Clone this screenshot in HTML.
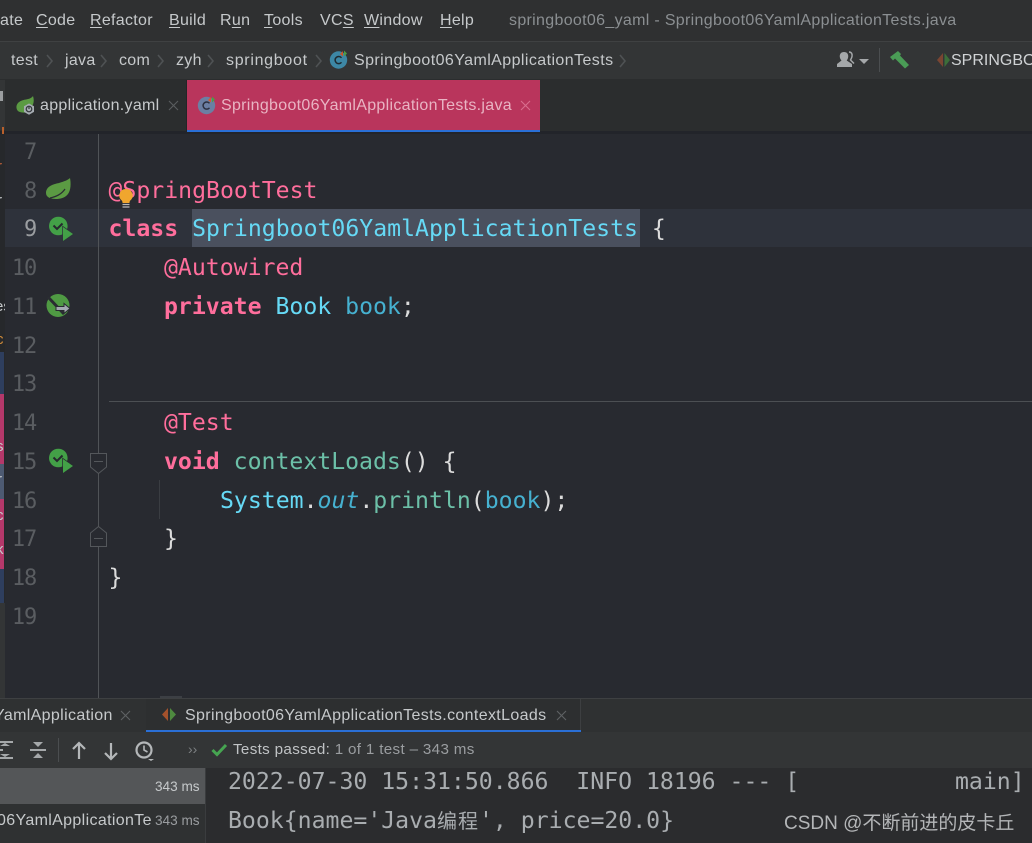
<!DOCTYPE html>
<html><head><meta charset="utf-8">
<style>
html,body{margin:0;padding:0;background:#282a30}
#r{position:relative;width:1032px;height:843px;overflow:hidden;background:#282a30;font-family:"Liberation Sans","Noto Sans CJK SC",sans-serif}
.b{position:absolute}
.t{position:absolute;white-space:pre;line-height:20px}
.m{color:#c6c9cb;font-size:16px;letter-spacing:.3px}
.m u{text-decoration-thickness:1px;text-underline-offset:2px}
.c{position:absolute;left:0;white-space:pre;font-family:"DejaVu Sans Mono","Noto Sans CJK SC",monospace;font-size:23.15px;line-height:39px;height:39px}
.n{position:absolute;width:36px;text-align:right;left:0;font-family:"DejaVu Sans Mono",monospace;font-size:22px;letter-spacing:-1.2px;line-height:39px;color:#5a5d61}
.p{color:#ff6e9c}.k{color:#ff6e9c;font-weight:bold}.y{color:#66d9f5}.f{color:#6cc0a8}.w{color:#dcdcdc}
.v{color:#46b1d0}
svg{position:absolute;overflow:visible}
.o{position:absolute;white-space:pre;font-family:"DejaVu Sans Mono","Noto Sans CJK SC",monospace;font-size:23.15px;line-height:39px;color:#a9adb0}
.e{position:absolute;left:0;font-size:15px;line-height:16px;color:#c6c9cb}
</style></head><body><div id="r">
<!-- bars -->
<div class="b" style="left:0;top:0;width:1032px;height:41px;background:#2f3031"></div>
<div class="b" style="left:0;top:41px;width:1032px;height:1px;background:#3f4142"></div>
<div class="b" style="left:0;top:42px;width:1032px;height:37px;background:#333536"></div>
<div class="b" style="left:0;top:79px;width:1032px;height:52px;background:#2b2d2e"></div>
<div class="b" style="left:0;top:131px;width:1032px;height:3px;background:#22242a"></div>
<div class="b" style="left:0;top:80px;width:5px;height:50px;background:#333536"></div>
<div class="b" style="left:0;top:91px;width:3px;height:10px;background:#9b9ea0"></div>
<div class="b" style="left:2px;top:127px;width:2px;height:7px;background:#b8602c"></div>
<!-- menu -->
<span class="t m" style="left:0;top:11px">ate</span>
<span class="t m" style="left:36px;top:11px"><u>C</u>ode</span>
<span class="t m" style="left:90px;top:11px"><u>R</u>efactor</span>
<span class="t m" style="left:169px;top:11px"><u>B</u>uild</span>
<span class="t m" style="left:220px;top:11px">R<u>u</u>n</span>
<span class="t m" style="left:264px;top:11px"><u>T</u>ools</span>
<span class="t m" style="left:320px;top:11px">VC<u>S</u></span>
<span class="t m" style="left:364px;top:11px"><u>W</u>indow</span>
<span class="t m" style="left:440px;top:11px"><u>H</u>elp</span>
<span class="t" style="left:509px;top:11px;font-size:16px;letter-spacing:.32px;color:#8b8f92">springboot06_yaml - Springboot06YamlApplicationTests.java</span>
<!-- breadcrumbs -->
<span class="t m" style="left:11px;top:51px">test</span>
<span class="t m" style="left:65px;top:51px">java</span>
<span class="t m" style="left:119px;top:51px">com</span>
<span class="t m" style="left:176px;top:51px">zyh</span>
<span class="t m" style="left:226px;top:51px;letter-spacing:.7px">springboot</span>
<span class="t m" style="left:354px;top:51px;letter-spacing:.42px">Springboot06YamlApplicationTests</span>
<svg width="1032" height="80" style="left:0;top:0" fill="none" stroke="#4f5254" stroke-width="1.6">
<path d="M47 55l5 6-5 6M101 55l5 6-5 6M158 55l5 6-5 6M208 55l5 6-5 6M316 55l5 6-5 6M620 55l5 6-5 6"/>
</svg>
<svg width="20" height="20" style="left:329px;top:50px"><circle cx="9.5" cy="10" r="8.7" fill="#3d87a5"/><path d="M12.5 7.8a3.6 3.6 0 1 0 0 4.5" stroke="#1f2a30" stroke-width="1.5" fill="none"/><path d="M14 1l-3 3 3 2.500z" fill="#c9552a"/><path d="M15 .5l3 3-3 3z" fill="#4d9c45"/></svg>
<!-- right toolbar -->
<svg width="40" height="24" style="left:837px;top:52px"><path d="M7 0c3 0 4.500 2 4.200 5-.2 1.500-.8 2.500-1.500 3.500l5.300 3.500V15H0v-3l4.500-3.500C3.700 7.500 3 6.500 2.800 5 2.500 2 4 0 7 0z" fill="#a5a8aa"/><path d="M12 0c2.500 0 3.500 2 3 4.500-.3 1.500-1 2.500-1.500 3.500l3.500 3.500" stroke="#a5a8aa" stroke-width="1.500" fill="none"/><path d="M22 7h10l-5 5z" fill="#a5a8aa"/></svg>
<div class="b" style="left:879px;top:48px;width:1px;height:24px;background:#4b4e50"></div>
<svg width="24" height="24" style="left:890px;top:51px"><path d="M0 6L8 0l3 3-1 1.500 9 9.500-4 3.500-10-10-2 2z" fill="#4a9c56"/></svg>
<svg width="14" height="16" style="left:937px;top:53px"><path d="M6 0v14L0 7z" fill="#7a4532"/><path d="M7.500 0v14L13 7z" fill="#3c6e3a"/></svg>
<span class="t" style="left:951px;top:51px;font-size:16px;color:#d0d3d5">SPRINGBOOT06</span>
<!-- tabs -->
<div class="b" style="left:187px;top:80px;width:353px;height:50px;background:#b9355c"></div>
<div class="b" style="left:186px;top:130px;width:354px;height:2px;background:#2a6fd6"></div>
<div class="b" style="left:186px;top:80px;width:1px;height:52px;background:#232527"></div>
<svg width="26" height="26" style="left:15px;top:95px"><path d="M1.500 13C1 7 7 5 11 4.500c3-.5 5.500-1.500 7-3.500 1 3 1 6 0 8.500l-6 8C6 18 2 17 1.500 13z" fill="#5b9a43"/><path d="M14 8.500l5 2.800v5.600l-5 2.800-5-2.800v-5.600z" fill="#a7adb3"/><circle cx="14" cy="14" r="2.800" fill="none" stroke="#33363a" stroke-width="1.200"/><path d="M14 11.500v2.500" stroke="#33363a" stroke-width="1.200"/></svg>
<span class="t" style="left:40px;top:96px;font-size:16px;letter-spacing:.3px;color:#c6c9cb">application.yaml</span>
<svg width="12" height="12" style="left:168px;top:100px"><path d="M1 1l9 9M10 1l-9 9" stroke="#5a5d5f" stroke-width="1.100"/></svg>
<svg width="20" height="20" style="left:197px;top:95px"><circle cx="9.500" cy="10.500" r="8.700" fill="#6b7fa3"/><path d="M12.500 8.300a3.600 3.600 0 1 0 0 4.500" stroke="#2c3040" stroke-width="1.500" fill="none"/><path d="M14 2l-3 3 3 2.500z" fill="#d85a2a"/><path d="M15 1.500l3 3-3 3z" fill="#4d9c45"/></svg>
<span class="t" style="left:221px;top:96px;font-size:16px;letter-spacing:.3px;color:#e9b4c3">Springboot06YamlApplicationTests.java</span>
<svg width="12" height="12" style="left:520px;top:100px"><path d="M1 1l9 9M10 1l-9 9" stroke="#d96e8e" stroke-width="1.100"/></svg>
<!-- left strip -->
<div class="b" style="left:0;top:134px;width:5px;height:218px;background:#26282b"></div>
<div class="b" style="left:0;top:603px;width:5px;height:95px;background:#333536"></div>
<div class="b" style="left:0;top:352px;width:5px;height:251px;background:#26282b"></div>
<div class="b" style="left:0;top:352px;width:4px;height:42px;background:#2e3e5e"></div>
<div class="b" style="left:0;top:394px;width:4px;height:70px;background:#b4386a"></div>
<div class="b" style="left:0;top:464px;width:4px;height:35px;background:#4d5a72"></div>
<div class="b" style="left:0;top:499px;width:4px;height:70px;background:#b4386a"></div>
<div class="b" style="left:0;top:569px;width:4px;height:34px;background:#2e3e5e"></div>
<div class="b" style="left:0;top:134px;width:5px;height:470px;overflow:hidden">
<span class="e" style="top:25px;left:-3px;color:#c0603a">r</span>
<span class="e" style="top:59px;left:-3px">r</span>
<span class="e" style="top:165px;left:-5px">es</span>
<span class="e" style="top:198px;left:-4px;color:#d08a3a">c</span>
<span class="e" style="top:305px;left:-4px">s</span>
<span class="e" style="top:338px;left:-3px">r</span>
<span class="e" style="top:374px;left:-4px">c</span>
<span class="e" style="top:408px;left:-4px">k</span>
</div>
<!-- current line -->
<div class="b" style="left:5px;top:209px;width:1027px;height:38px;background:#2e323b"></div>
<div class="b" style="left:192px;top:209px;width:448px;height:38px;background:#4a505e"></div>
<!-- gutter -->
<div class="b" style="left:98px;top:134px;width:1px;height:564px;background:#505357"></div>
<div class="b" style="left:109px;top:401px;width:923px;height:1px;background:#4c4f53"></div>
<div class="b" style="left:159px;top:480px;width:1px;height:39px;background:#3a3d42"></div>
<div class="n" style="top:133px">7</div>
<div class="n" style="top:172px">8</div>
<div class="n" style="top:210px;color:#9a9da0">9</div>
<div class="n" style="top:249px">10</div>
<div class="n" style="top:288px">11</div>
<div class="n" style="top:327px">12</div>
<div class="n" style="top:365px">13</div>
<div class="n" style="top:404px">14</div>
<div class="n" style="top:443px">15</div>
<div class="n" style="top:482px">16</div>
<div class="n" style="top:520px">17</div>
<div class="n" style="top:559px">18</div>
<div class="n" style="top:598px">19</div>
<!-- code -->
<div class="c" style="left:108.500px;top:172px"><span class="p">@SpringBootTest</span></div>
<div class="c" style="left:108.500px;top:210px"><span class="k">class</span> <span class="y">Springboot06YamlApplicationTests</span> <span class="w">{</span></div>
<div class="c" style="left:164px;top:249px"><span class="p">@Autowired</span></div>
<div class="c" style="left:164px;top:288px"><span class="k">private</span> <span class="y">Book</span> <span class="v">book</span><span class="w">;</span></div>
<div class="c" style="left:164px;top:404px"><span class="p">@Test</span></div>
<div class="c" style="left:164px;top:443px"><span class="k">void</span> <span class="f">contextLoads</span><span class="w">() {</span></div>
<div class="c" style="left:220px;top:482px"><span class="y">System</span><span class="w">.</span><span class="v" style="font-style:italic">out</span><span class="w">.</span><span class="f">println</span><span class="w">(</span><span class="v">book</span><span class="w">);</span></div>
<div class="c" style="left:164px;top:520px"><span class="w">}</span></div>
<div class="c" style="left:108.500px;top:559px"><span class="w">}</span></div>
<!-- gutter icons -->
<svg width="26" height="24" style="left:46px;top:178px"><path d="M0 15C0 8 8 6 13 5 18 3.500 22 2 24 0c1 5 1 12-2 16-3 4-8 5-12 5C4 21 0 19 0 15z" fill="#5b9a43"/><path d="M4 20c5-1 11-3 15-9" stroke="#2b2d33" stroke-width="1.200" fill="none"/></svg>
<svg width="28" height="28" style="left:49px;top:217px"><circle cx="9.300" cy="9" r="9.300" fill="#43a047"/><path d="M4.500 8.500l3.500 3.500 5.500-5.500" stroke="#26282e" stroke-width="2" fill="none"/><path d="M14 10l10 7-10 7z" fill="#43a047" stroke="#2e323b" stroke-width="1.500" paint-order="stroke"/></svg>
<svg width="28" height="26" style="left:46px;top:294px"><circle cx="12" cy="11.500" r="11.500" fill="#4f9a43"/><path d="M2 3l16 17" stroke="#2a2c32" stroke-width="3"/><path d="M10 10.500h8v-3l6 5-6 5v-3h-8z" transform="translate(0,2)" fill="#a3a9b0" stroke="#282a30" stroke-width="1"/></svg>
<svg width="28" height="28" style="left:49px;top:449px"><circle cx="9.300" cy="9" r="9.300" fill="#43a047"/><path d="M4.500 8.500l3.500 3.500 5.500-5.500" stroke="#26282e" stroke-width="2" fill="none"/><path d="M14 10l10 7-10 7z" fill="#43a047" stroke="#282a30" stroke-width="1.500" paint-order="stroke"/></svg>
<svg width="120" height="120" style="left:80px;top:440px" fill="#282a30" stroke="#54575b" stroke-width="1"><path d="M10.500 13.500h16v13.500l-8 6.500-8-6.500z"/><path d="M14 21.500h9" fill="none"/><path d="M10.500 106.500h16V93l-8-6.500-8 6.500z"/><path d="M14 98.500h9" fill="none"/></svg>
<svg width="30" height="34" style="left:112px;top:186px"><path d="M14 3a6.500 6.500 0 0 1 4.500 11.300c-1 1-1 2-1 2.700h-7c0-.7 0-1.700-1-2.700A6.500 6.500 0 0 1 14 3z" fill="#f0a62e"/><path d="M10.500 18.500h7M10.500 21h7" stroke="#b8b8b8" stroke-width="1.200"/></svg>
<!-- bottom -->
<div class="b" style="left:0;top:698px;width:1032px;height:1px;background:#3e4042"></div>
<div class="b" style="left:160px;top:696px;width:22px;height:2px;background:#3c3f44"></div>
<div class="b" style="left:0;top:699px;width:1032px;height:33px;background:#2f3132"></div>
<div class="b" style="left:0;top:732px;width:1032px;height:36px;background:#333536"></div>
<div class="b" style="left:0;top:768px;width:206px;height:75px;background:#2f3132"></div>
<div class="b" style="left:206px;top:768px;width:826px;height:75px;background:#2b2c2e"></div>
<div class="b" style="left:205px;top:768px;width:1px;height:75px;background:#3a3c3e"></div>
<div class="b" style="left:0;top:768px;width:205px;height:36px;background:#545658"></div>
<div class="b" style="left:146px;top:699px;width:435px;height:33px;background:#2d2f30"></div>
<div class="b" style="left:146px;top:730px;width:435px;height:2px;background:#2a6fd6"></div>
<div class="b" style="left:580px;top:699px;width:1px;height:31px;background:#3d3f41"></div>
<span class="t" style="left:-6px;top:706px;font-size:16px;letter-spacing:.35px;color:#c6c9cb">YamlApplication</span>
<svg width="12" height="12" style="left:120px;top:710px"><path d="M1 1l9 9M10 1l-9 9" stroke="#5f6264" stroke-width="1.100"/></svg>
<svg width="16" height="16" style="left:162px;top:708px"><path d="M6 0v13L0 6.500z" fill="#a5522c"/><path d="M8 0v13l6-6.500z" fill="#4e8a3f"/></svg>
<span class="t" style="left:185px;top:706px;font-size:16px;letter-spacing:.35px;color:#c6c9cb">Springboot06YamlApplicationTests.contextLoads</span>
<svg width="12" height="12" style="left:556px;top:710px"><path d="M1 1l9 9M10 1l-9 9" stroke="#5f6264" stroke-width="1.100"/></svg>
<!-- run toolbar -->
<svg width="60" height="36" style="left:0;top:732px" fill="#a5a8aa" stroke="none">
<path d="M0 9h13v2H0zM0 25h13v2H0zM0 17h3v2H0z"/><path d="M0 14h10l-5-3zM0 22h10l-5 3z"/>
<path d="M30 17h16v2H30z"/><path d="M33 10h10l-5 5zM33 26h10l-5-5z"/>
</svg>
<div class="b" style="left:58px;top:738px;width:1px;height:24px;background:#4b4e50"></div>
<svg width="90" height="24" style="left:70px;top:739px" fill="none" stroke="#b4b7b9" stroke-width="2.200">
<path d="M9 20V4M3 10l6-6 6 6"/><path d="M41 4v16M35 14l6 6 6-6"/>
<circle cx="74" cy="11" r="7.500"/><path d="M74 6.500V11l3.500 2" stroke-width="1.600"/><path d="M78 20h6l-3 2z" fill="#b4b7b9" stroke="none"/>
</svg>
<span class="t" style="left:188px;top:739px;font-size:14px;color:#7d8082">››</span>
<svg width="18" height="14" style="left:211px;top:743px"><path d="M1.500 7l4.500 4.500L15 2" stroke="#46a551" stroke-width="3" fill="none"/></svg>
<span class="t" style="left:233px;top:740px;font-size:15.200px;letter-spacing:.33px;color:#c0c3c5">Tests passed: <span style="color:#9a9da0">1 of 1 test – 343 ms</span></span>
<span class="t" style="left:155px;top:777px;font-size:13.600px;color:#c6c9cb">343 ms</span>
<span class="t" style="left:-3px;top:811px;font-size:16px;letter-spacing:.35px;color:#c6c9cb">06YamlApplicationTe</span>
<span class="t" style="left:155px;top:811px;font-size:13.600px;color:#9a9da0">343 ms</span>
<div class="o" style="left:228px;top:763px">2022-07-30 15:31:50.866  INFO 18196 --- [</div>
<div class="o" style="left:955px;top:763px">main]</div>
<div class="o" style="left:228px;top:802px">Book{name='Java<span style="font-size:20px;letter-spacing:1px">编程</span>', price=20.0}</div>
<span class="t" style="left:784px;top:814px;font-size:19px;color:#b4b6b8">CSDN @不断前进的皮卡丘</span>
</div></body></html>
